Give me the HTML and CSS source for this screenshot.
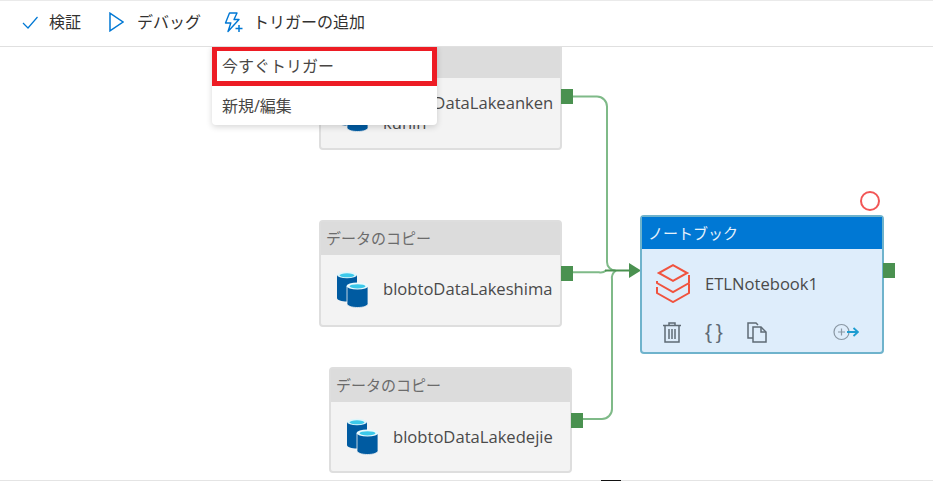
FILE: index.html
```html
<!DOCTYPE html>
<html lang="ja">
<head>
<meta charset="utf-8">
<title>トリガーの追加</title>
<link rel="stylesheet" href="styles.css">
</head>
<body>
<div class="page">
  <header class="toolbar">
    <button class="tool tool-validate">
      <svg class="ico-check" width="16" height="13" viewBox="0 0 16 13"><path d="M1 7l5 5L15.500 1" fill="none" stroke="#0078d4" stroke-width="1.200"/></svg>
      <span>検証</span>
    </button>
    <button class="tool tool-debug">
      <svg class="ico-play" width="15" height="20" viewBox="0 0 15 20"><path d="M1 1.200v17.600L14 10z" fill="none" stroke="#0078d4" stroke-width="1.500"/></svg>
      <span>デバッグ</span>
    </button>
    <button class="tool tool-trigger">
      <svg class="ico-bolt" width="19" height="21" viewBox="0 0 19 21"><path d="M5.500 1h7.500L10 7.500h5L4 19.500l2.800-8.500H1.500z" fill="none" stroke="#0078d4" stroke-width="1.400" stroke-linejoin="round"/><path d="M11.500 16.500h7M15 13v7" stroke="#0078d4" stroke-width="1.500"/></svg>
      <span>トリガーの追加</span>
    </button>
  </header>

  <main class="canvas">
    <svg class="wires" width="933" height="434" viewBox="0 47 933 434">
      <g fill="none" stroke="#7fba88" stroke-width="2">
        <path d="M573 96.500h24a10 10 0 0 1 10 10V262a8.500 8.500 0 0 0 8.500 8.500"/>
        <path d="M573 272.300h26a8 8 0 0 0 7-1.800"/>
        <path d="M583 419h19a10 10 0 0 0 10-10V280a9.500 9.500 0 0 1 4-9.500"/>
      </g>
      <path d="M605 270.500h25" stroke="#4a9150" stroke-width="2"/>
      <path d="M629 263l12 7.500-12 7.500z" fill="#4a9150"/>
    </svg>

    <section class="node node-a">
      <div class="node-head">データのコピー</div>
      <div class="node-body">
        <svg class="ico-db" width="32" height="37" viewBox="0 0 32 37"><use href="#db"/></svg>
        <span class="node-name">blobtoDataLakeanken<br>kunin</span>
      </div>
      <i class="port"></i>
    </section>

    <section class="node node-b">
      <div class="node-head">データのコピー</div>
      <div class="node-body">
        <svg class="ico-db" width="32" height="37" viewBox="0 0 32 37">
          <defs>
            <g id="db">
              <path d="M0 4v23c0 2.200 4.500 3.500 10 3.500s10-1.300 10-3.500V4z" fill="#005ba1"/>
              <ellipse cx="10" cy="4" rx="10" ry="3.300" fill="#dff6fb"/>
              <ellipse cx="10" cy="4.300" rx="7.500" ry="2" fill="#3cc9ea"/>
              <path d="M10 15v17.500c0 2.500 4.700 4 10.500 4S31 35 31 32.500V15z" fill="#005ba1" stroke="#f3f3f3" stroke-width=".8"/>
              <ellipse cx="20.500" cy="15" rx="11" ry="3.500" fill="#eafafd"/>
              <ellipse cx="20.500" cy="15.300" rx="8" ry="2.100" fill="#3cc9ea"/>
            </g>
          </defs>
          <use href="#db"/>
        </svg>
        <span class="node-name">blobtoDataLakeshima</span>
      </div>
      <i class="port"></i>
    </section>

    <section class="node node-c">
      <div class="node-head">データのコピー</div>
      <div class="node-body">
        <svg class="ico-db" width="32" height="37" viewBox="0 0 32 37"><use href="#db"/></svg>
        <span class="node-name">blobtoDataLakedejie</span>
      </div>
      <i class="port"></i>
    </section>

    <section class="node node-nb">
      <div class="node-head">ノートブック</div>
      <div class="node-main">
        <svg class="ico-bricks" width="36" height="39" viewBox="0 0 36 39">
          <g fill="none" stroke="#f0533f" stroke-width="2">
            <path d="M17 1.200L2.800 9 17 16.800 31.200 9z"/>
            <path d="M1 17v2l16 9 16-9v-8"/>
            <path d="M1 23v6l16 9 16-9v-9"/>
          </g>
        </svg>
        <span class="node-name">ETLNotebook1</span>
      </div>
      <div class="node-actions">
        <svg width="18" height="21" viewBox="0 0 18 21"><g fill="none" stroke="#5f6b75" stroke-width="1.500"><path d="M0 3.500h18M6 3.500V1h6v2.500M2 3.500V20h14V3.500"/><path d="M6 7v10M9 7v10M12 7v10"/></g></svg>
        <span class="braces">{ }</span>
        <svg width="20" height="21" viewBox="0 0 20 21"><g fill="none" stroke="#5f6b75" stroke-width="1.500"><path d="M6 16H1V1h8l2 2"/><path d="M6 5h8l5 5v10H6z"/><path d="M14 5v5h5"/></g></svg>
        <svg class="ico-add" width="26" height="18" viewBox="0 0 26 18"><g fill="none"><circle cx="8.500" cy="9" r="7.500" stroke="#8a97a3" stroke-width="1.200"/><path d="M5 9h7M8.500 5.500v7" stroke="#8a97a3" stroke-width="1.200"/><path d="M14 9h11M20.500 5L25 9l-4.500 4" stroke="#1c9cd0" stroke-width="1.800"/></g></svg>
      </div>
      <i class="port"></i>
    </section>

    <span class="ring"></span>

    <nav class="menu">
      <div class="menu-item menu-item-hit">今すぐトリガー</div>
      <div class="menu-item">新規/編集</div>
    </nav>
  </main>

  <footer class="foot"><i class="foot-mark"></i></footer>
</div>
</body>
</html>
```
FILE: styles.css
```css
* { box-sizing: border-box; }
html, body { margin: 0; padding: 0; }
body {
  width: 933px;
  height: 481px;
  overflow: hidden;
  background: #fff;
  color: #323130;
  font-family: "Open Sans", "Noto Sans CJK JP", sans-serif;
  font-size: 16px;
}
.page { display: flex; flex-direction: column; height: 481px; }

.toolbar {
  flex: none;
  height: 47px;
  display: flex;
  align-items: center;
  padding: 0 0 3px 22px;
  border-top: 1px solid #eaeaea;
  border-bottom: 1px solid #e0e0e0;
}
.tool {
  display: flex;
  align-items: center;
  padding: 0;
  border: 0;
  background: none;
  color: #323130;
  font: inherit;
  line-height: 22px;
}
.tool-validate svg { margin-right: 11px; }
.tool-debug { margin-left: 28px; }
.tool-debug svg { margin-right: 13px; }
.tool-trigger { margin-left: 23px; }
.tool-trigger svg { margin-right: 10px; }

.canvas { position: relative; flex: 1; overflow: hidden; }
.wires { position: absolute; left: 0; top: 0; }

.node {
  position: absolute;
  width: 243px;
  display: flex;
  flex-direction: column;
  border: 2px solid #dedede;
  border-radius: 4px;
  background: #f3f3f3;
}
.node-a { left: 319px; top: -4px; height: 107px; }
.node-b { left: 319px; top: 173px; height: 107px; }
.node-b .node-body { padding-bottom: 2px; }
.node-c { left: 329px; top: 320px; height: 106px; }
.node-nb {
  left: 640px;
  top: 168px;
  width: 244px;
  height: 139px;
  border-color: #6fb3cc;
  background: #deedfb;
}
.node-head {
  flex: none;
  height: 33px;
  padding-left: 5px;
  background: #dcdcdc;
  color: #6b6b6b;
  font-size: 15px;
  line-height: 33px;
}
.node-body {
  flex: 1;
  display: flex;
  align-items: center;
  padding-left: 16px;
  gap: 14px;
}
.node-name { font-size: 16.6px; line-height: 20px; color: #4a4a4a; }

.port {
  position: absolute;
  top: 44px;
  right: -13px;
  width: 12px;
  height: 15px;
  background: #4a9150;
}
.node-nb .port { top: 46px; }

.node-nb .node-head {
  height: 32px;
  padding-left: 6px;
  background: #0078d4;
  color: #e6f2fb;
  line-height: 32px;
}
.node-main {
  display: flex;
  align-items: center;
  gap: 13px;
  padding: 15px 0 0 14px;
}
.node-actions {
  display: flex;
  align-items: center;
  margin-top: 18px;
  padding-left: 21px;
  height: 22px;
}
.braces {
  margin-left: 24px;
  width: 19px;
  color: #5f6b75;
  font-family: "Liberation Sans", sans-serif;
  font-size: 21px;
  white-space: pre;
  letter-spacing: -1px;
  line-height: 20px;
}
.node-actions svg:nth-of-type(2) { margin-left: 23px; }
.ico-add { margin-left: 66px; }

.ring {
  position: absolute;
  left: 860px;
  top: 144px;
  width: 20px;
  height: 20px;
  border: 2px solid #f25656;
  border-radius: 50%;
}

.menu {
  position: absolute;
  left: 212px;
  top: -1px;
  width: 225px;
  height: 79px;
  background: #fff;
  border-radius: 0 0 4px 4px;
  box-shadow: 0 2px 6px rgba(0, 0, 0, .16);
}
.menu-item {
  padding-left: 10px;
  color: #484644;
  line-height: 40px;
  height: 40px;
}
.menu-item-hit {
  padding-left: 5px;
  line-height: 30px;
  border: 5px solid #ed1c24;
}

.foot {
  position: absolute;
  left: 0;
  top: 480px;
  width: 933px;
  height: 1px;
  background: #e4e4e4;
}
.foot-mark {
  position: absolute;
  left: 601px;
  top: 0;
  width: 20px;
  height: 1px;
  background: #111;
}
```
